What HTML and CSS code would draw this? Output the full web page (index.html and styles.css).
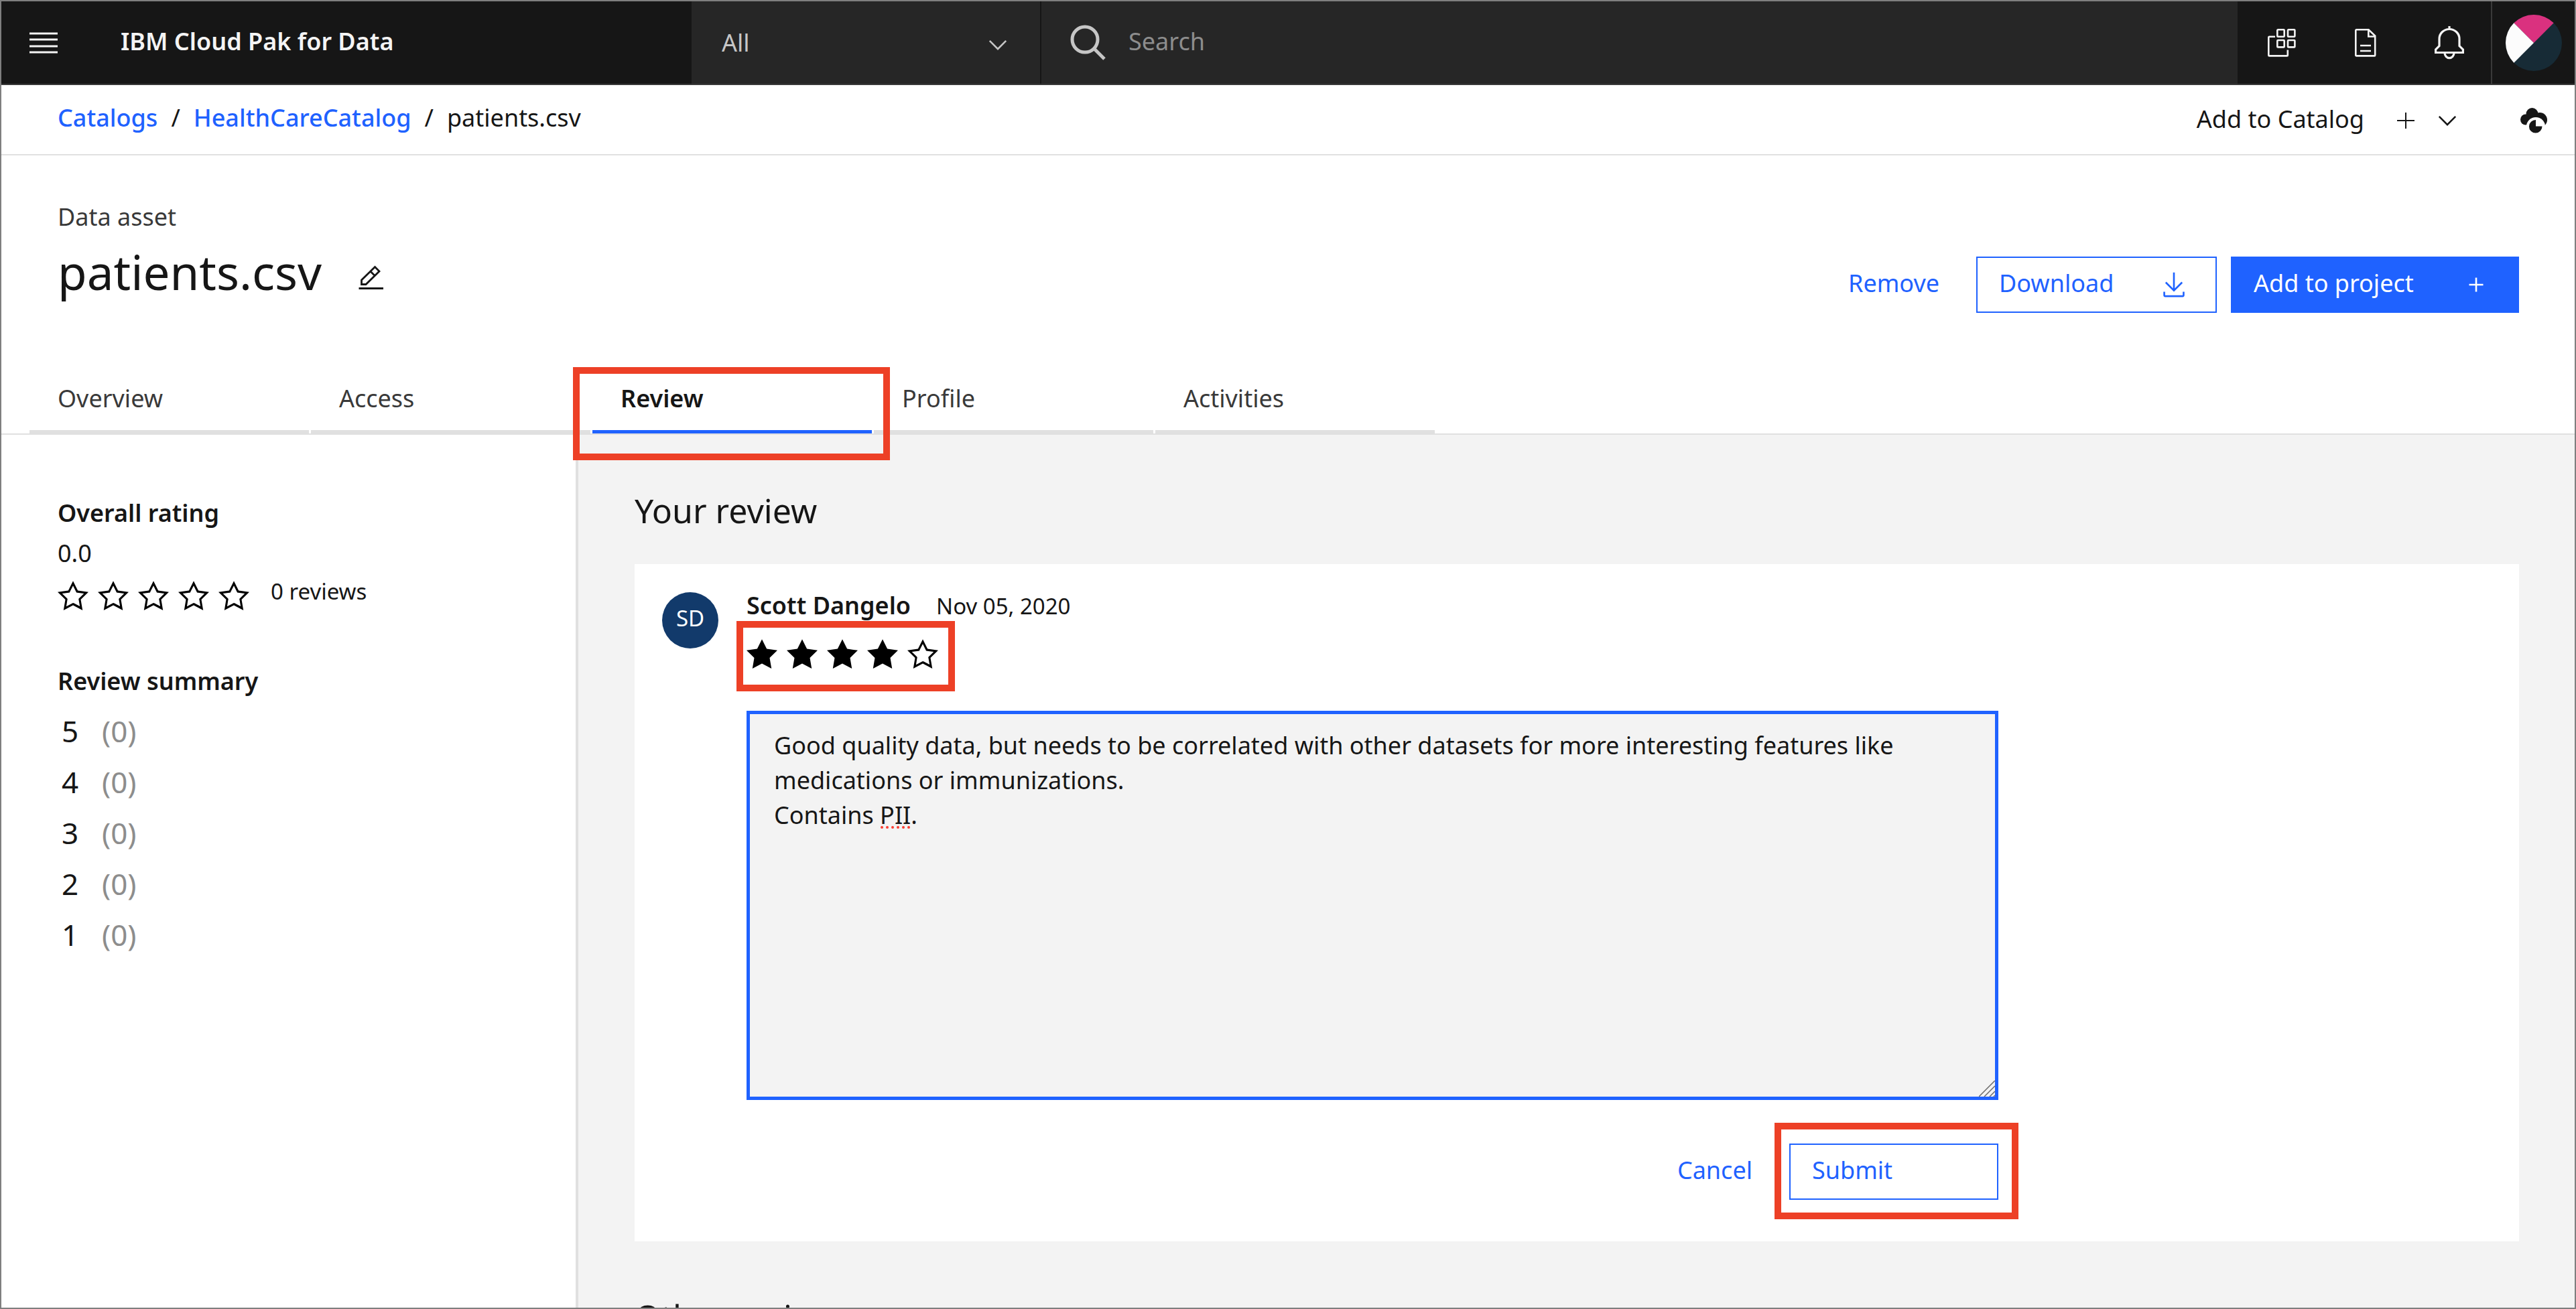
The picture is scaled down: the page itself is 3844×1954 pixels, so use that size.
FILE: index.html
```html
<!DOCTYPE html>
<html lang="en">
<head>
<meta charset="utf-8">
<meta name="viewport" content="width=device-width, initial-scale=1">
<title>patients.csv - IBM Cloud Pak for Data</title>
<link rel="stylesheet" href="styles.css">
</head>
<body>
<svg class="sprite" aria-hidden="true">
  <symbol id="star-outline" viewBox="0 0 32 32"><path d="M16,6.52l2.76,5.58.46,1,1,.15,6.16.89L22,18.44l-.75.73.18,1,1.05,6.13-5.51-2.89L16,23l-.93.49L9.56,26.34l1-6.13.18-1L10,18.44,5.58,14.09l6.16-.89,1-.15.46-1L16,6.52M16,2l-4.55,9.22L1.28,12.69l7.36,7.18L6.9,30,16,25.22,25.1,30,23.36,19.87l7.36-7.17L20.55,11.22Z"/></symbol>
  <symbol id="star-filled" viewBox="0 0 32 32"><path d="M16,2l-4.55,9.22L1.28,12.69l7.36,7.18L6.9,30,16,25.22,25.1,30,23.36,19.87l7.36-7.17L20.55,11.22Z"/></symbol>
  <symbol id="chevron" viewBox="0 0 16 16"><path d="M8 11L3 6 3.7 5.3 8 9.6 12.3 5.3 13 6z"/></symbol>
</svg>

<header class="topbar">
  <button class="icon-button" type="button" aria-label="Menu">
    <svg width="42" height="32" viewBox="0 0 42 32" fill="none" stroke="#f4f4f4" stroke-width="3"><path d="M0 2H42M0 11H42M0 21H42M0 30H42"/></svg>
  </button>
  <a class="brand" href="#">IBM Cloud Pak for Data</a>
  <div class="scope">
    <select class="scope-select" aria-label="Search scope"><option>All</option></select>
    <svg class="scope-arrow" width="42" height="42"><use href="#chevron"/></svg>
  </div>
  <div class="search">
    <svg width="54" height="54" viewBox="0 0 54 54" fill="none" stroke="#c6c6c6" stroke-width="5"><circle cx="22" cy="22" r="19"/><path d="M35 35L51 51"/></svg>
    <input class="search-input" type="search" placeholder="Search" aria-label="Search">
  </div>
  <nav class="tools">
    <button class="icon-button" type="button" aria-label="Services">
      <svg width="42" height="42" viewBox="0 0 42 42" fill="none" stroke="#f4f4f4" stroke-width="2.6"><rect x="14.3" y="1.3" width="10.4" height="10.4" rx="1"/><rect x="30" y="1.3" width="10.4" height="10.4" rx="1"/><rect x="14.3" y="17" width="10.4" height="10.4" rx="1"/><rect x="30" y="17" width="10.4" height="10.4" rx="1"/><path d="M11 11.7H2.3a1 1 0 0 0-1 1V39.4a1 1 0 0 0 1 1H28.8a1 1 0 0 0 1-1V31.5"/></svg>
    </button>
    <button class="icon-button" type="button" aria-label="Documents">
      <svg width="32" height="42" viewBox="0 0 32 42" fill="none" stroke="#f4f4f4" stroke-width="2.6"><path d="M2.3 1.3H20.5L30.2 10.5V39.4a1 1 0 0 1-1 1H2.3a1 1 0 0 1-1-1V2.3a1 1 0 0 1 1-1ZM20.3 1.3V11.5H30.2M8 25H24M8 33H24"/></svg>
    </button>
    <button class="icon-button" type="button" aria-label="Notifications">
      <svg width="46" height="52" viewBox="0 0 46 52" fill="none" stroke="#f4f4f4" stroke-width="3.2"><path d="M23 1V6M23 5.5C14.500 5.500 8 12 8 20V30.500L2.600 36V40.500H43.400V36L38 30.500V20C38 12 31.500 5.500 23 5.500ZM16 41a7 7.600 0 0 0 14 0"/></svg>
    </button>
    <button class="icon-button account" type="button" aria-label="Account">
      <svg width="84" height="84" viewBox="0 0 84 84"><circle cx="42" cy="42" r="42" fill="#172b36"/><path d="M42 42L12.300 12.300A42 42 0 0 1 71.700 12.300Z" fill="#da317f"/><path d="M42 42L12.300 71.700A42 42 0 0 1 12.300 12.300Z" fill="#fcfcfc"/></svg>
    </button>
  </nav>
</header>

<div class="crumbbar">
  <nav class="crumbs" aria-label="Breadcrumb">
    <a class="crumb-link" href="#">Catalogs</a><span>/</span><a class="crumb-link" href="#">HealthCareCatalog</a><span>/</span><span>patients.csv</span>
  </nav>
  <div class="crumb-actions">
    <button class="plain-button" type="button">
      <span class="label">Add to Catalog</span>
      <svg width="42" height="42" viewBox="0 0 42 42" stroke="#161616" stroke-width="2"><path d="M8 21H34M21 9V33"/></svg>
      <svg width="42" height="42" fill="#161616"><use href="#chevron"/></svg>
    </button>
    <button class="plain-button" type="button" aria-label="Cloud status">
      <svg width="40" height="38" viewBox="0 0 40 38"><g fill="#161616"><circle cx="17.500" cy="9" r="9"/><circle cx="8" cy="17.500" r="8"/><circle cx="29" cy="18" r="11"/><path d="M8 10H30V25H8Z"/></g><circle cx="23" cy="28" r="14" fill="#fff"/><path d="M23 27.500V18A9.800 9.800 0 1 0 32.500 27.500Z" fill="#161616"/></svg>
    </button>
  </div>
</div>

<section class="asset-head">
  <div class="asset-row">
    <div>
      <p class="asset-kind">Data asset</p>
      <div class="asset-name">
        <h1>patients.csv</h1>
        <button class="plain-button" type="button" aria-label="Edit name">
          <svg width="38" height="38" viewBox="0 0 38 38" fill="none" stroke="#161616" stroke-width="2.8"><path d="M4.500 22L24.500 2.500L31 9L11 28.500H4.500ZM18 9.300L24.500 15.800M0.500 34.500H37"/></svg>
        </button>
      </div>
    </div>
    <div class="asset-actions">
      <button class="btn ghost" type="button"><span class="label">Remove</span></button>
      <button class="btn outline download" type="button"><span class="label">Download</span>
        <svg width="42" height="42" viewBox="0 0 16 16" fill="#1f62ff"><path d="M13 7L12.300 6.300 8.500 10.100 8.500 1 7.500 1 7.500 10.100 3.700 6.300 3 7 8 12zM13 12v2H3v-2H2v2c0 .6.4 1 1 1h10c.6 0 1-.4 1-1v-2z"/></svg>
      </button>
      <button class="btn primary" type="button"><span class="label">Add to project</span>
        <svg width="42" height="42" viewBox="0 0 16 16" fill="#fff"><path d="M8.500 7.500V4h-1v3.500H4v1h3.500V12h1V8.500H12v-1z"/></svg>
      </button>
    </div>
  </div>
  <nav class="tabs" aria-label="Asset sections">
    <a class="tab" href="#">Overview</a>
    <a class="tab" href="#">Access</a>
    <a class="tab current" href="#" aria-current="page">Review<span class="marker marker-tab"></span></a>
    <a class="tab" href="#">Profile</a>
    <a class="tab" href="#">Activities</a>
  </nav>
</section>

<div class="content">
  <aside class="summary">
    <h3>Overall rating</h3>
    <p class="score">0.0</p>
    <div class="score-row">
      <div class="stars" role="img" aria-label="0 of 5 stars">
        <svg width="50" height="50"><use href="#star-outline"/></svg>
        <svg width="50" height="50"><use href="#star-outline"/></svg>
        <svg width="50" height="50"><use href="#star-outline"/></svg>
        <svg width="50" height="50"><use href="#star-outline"/></svg>
        <svg width="50" height="50"><use href="#star-outline"/></svg>
      </div>
      <span class="small">0 reviews</span>
    </div>
    <h3 class="breakdown-title">Review summary</h3>
    <ul class="breakdown">
      <li><span>5</span><span class="count">(0)</span></li>
      <li><span>4</span><span class="count">(0)</span></li>
      <li><span>3</span><span class="count">(0)</span></li>
      <li><span>2</span><span class="count">(0)</span></li>
      <li><span>1</span><span class="count">(0)</span></li>
    </ul>
  </aside>

  <main class="reviews">
    <h2>Your review</h2>
    <article class="card">
      <div class="avatar">SD</div>
      <form class="review-form">
        <div class="byline"><h3>Scott Dangelo</h3><time class="small" datetime="2020-11-05">Nov 05, 2020</time></div>
        <div class="stars rating" role="radiogroup" aria-label="Your rating">
          <label class="star"><input type="radio" name="rating" value="1" aria-label="1 star"><svg width="50" height="50"><use href="#star-filled"/></svg></label>
          <label class="star"><input type="radio" name="rating" value="2" aria-label="2 stars"><svg width="50" height="50"><use href="#star-filled"/></svg></label>
          <label class="star"><input type="radio" name="rating" value="3" aria-label="3 stars"><svg width="50" height="50"><use href="#star-filled"/></svg></label>
          <label class="star"><input type="radio" name="rating" value="4" aria-label="4 stars" checked><svg width="50" height="50"><use href="#star-filled"/></svg></label>
          <label class="star"><input type="radio" name="rating" value="5" aria-label="5 stars"><svg width="50" height="50"><use href="#star-outline"/></svg></label>
          <span class="marker marker-rating"></span>
        </div>
        <div class="field">
          <textarea class="review-text" aria-label="Review text" spellcheck="false">Good quality data, but needs to be correlated with other datasets for more interesting features like medications or immunizations.
Contains PII.</textarea>
          <svg class="spelling" width="46" height="4" viewBox="0 0 46 4" fill="#fb3e33"><circle cx="2" cy="2" r="2"/><circle cx="10" cy="2" r="2"/><circle cx="18" cy="2" r="2"/><circle cx="26" cy="2" r="2"/><circle cx="34" cy="2" r="2"/><circle cx="42" cy="2" r="2"/></svg>
          <svg class="grip" width="24" height="24" viewBox="0 0 24 24" stroke="#6a6a6a" stroke-width="1.500"><path d="M0 24L24 0M8 24L24 8M16 24L24 16M22 24L24 22"/></svg>
        </div>
        <div class="form-actions">
          <button class="btn ghost" type="button"><span class="label">Cancel</span></button>
          <button class="btn outline submit" type="button"><span class="label">Submit</span><span class="marker marker-submit"></span></button>
        </div>
      </form>
    </article>
    <h2 class="others">Other reviews</h2>
  </main>
</div>
</body>
</html>
```
FILE: styles.css
```css
* { box-sizing: border-box; }

html { overflow: hidden; }

body {
  display: flex;
  flex-direction: column;
  height: 100vh;
  margin: 0;
  overflow: hidden;
  border: 2px solid #7f7f7f;
  background: #fff;
  color: #161616;
  font: 400 36px/48px "Noto Sans", sans-serif;
}

h1, h2, h3, p, ul { margin: 0; padding: 0; }
h1 { font-size: 71px; line-height: 88px; font-weight: 400; }
h2 { font-size: 50px; line-height: 64px; font-weight: 400; }
h3 { font-size: 36px; font-weight: 600; }
svg { display: block; flex: none; }
a { color: inherit; text-decoration: none; }

button, input, select, textarea {
  margin: 0;
  padding: 0;
  border: 0;
  border-radius: 0;
  background: none;
  color: inherit;
  font: inherit;
}

.sprite { position: absolute; width: 0; height: 0; }
.small { font-size: 33px; }
.label { padding-bottom: 4px; }

/* Top bar */
.topbar {
  display: flex;
  flex: none;
  height: 125px;
  border-bottom: 2px solid #393939;
  background: #262626;
  color: #f4f4f4;
}
.icon-button {
  display: flex;
  align-items: center;
  justify-content: center;
  width: 125px;
  background: #161616;
}
.brand {
  display: flex;
  align-items: center;
  width: 905px;
  padding: 0 0 4px 53px;
  background: #161616;
  font-weight: 600;
}
.scope {
  position: relative;
  display: flex;
  width: 522px;
  border-right: 2px solid #161616;
  color: #c6c6c6;
}
.scope-select { width: 100%; padding-left: 45px; appearance: none; }
.scope-arrow { position: absolute; top: 44px; right: 42px; fill: #c6c6c6; }
.search {
  display: flex;
  flex: 1;
  align-items: center;
  gap: 33px;
  padding-left: 43px;
}
.search-input { flex: 1; padding-bottom: 4px; appearance: none; outline: 0; }
.search-input::placeholder { color: #8d8d8d; opacity: 1; }
.tools { display: flex; background: #161616; padding-left: 3px; }
.account { border-left: 2px solid #393939; }

/* Breadcrumb bar */
.crumbbar {
  display: flex;
  flex: none;
  align-items: center;
  justify-content: space-between;
  height: 105px;
  padding: 0 41px 0 84px;
  border-bottom: 2px solid #e0e0e0;
}
.crumbs { display: flex; gap: 20px; padding-bottom: 6px; }
.crumb-link { color: #1f62ff; font-weight: 500; }
.crumb-actions { display: flex; align-items: center; gap: 88px; }
.plain-button { display: flex; align-items: center; gap: 20px; padding-top: 2px; }
.plain-button .label { margin-right: 21px; }

/* Asset header */
.asset-head { flex: none; border-bottom: 2px solid #e0e0e0; }
.asset-row {
  display: flex;
  align-items: flex-start;
  justify-content: space-between;
  padding: 68px 83px 0 84px;
}
.asset-kind { margin-bottom: 14px; color: #393939; }
.asset-name { display: flex; align-items: center; gap: 55px; }
.asset-name .plain-button { padding-top: 18px; }
.asset-actions { display: flex; margin-top: 83px; gap: 21px; }

.btn {
  position: relative;
  display: flex;
  align-items: center;
  justify-content: space-between;
  height: 84px;
  padding: 0 41px 0 32px;
  border: 2px solid transparent;
  color: #1f62ff;
}
.ghost { padding: 0 32px; }
.outline { border-color: #1f62ff; }
.primary { width: 430px; background: #1f62ff; color: #fff; }
.download { width: 359px; }
.submit { width: 312px; }

.tabs { display: flex; gap: 3px; margin-top: 82px; padding-left: 42px; }
.tab {
  position: relative;
  width: 417px;
  padding: 22px 0 23px 42px;
  border-bottom: 5px solid #e0e0e0;
  color: #393939;
}
.current { border-color: #1f62ff; color: #161616; font-weight: 600; }

/* Highlight frames drawn over the page */
.marker {
  position: absolute;
  z-index: 1;
  border: 10px solid #ed4026;
  pointer-events: none;
}
.marker-tab { top: -1px; left: -29px; width: 473px; height: 139px; }
.marker-rating { top: -24px; left: -13px; width: 326px; height: 105px; }
.marker-submit { top: -33px; left: -24px; width: 364px; height: 144px; }

/* Content */
.content {
  display: grid;
  flex: 1;
  grid-template-columns: 861px 1fr;
  min-height: 0;
}
.summary { padding: 93px 0 0 84px; border-right: 4px solid #e0e0e0; }
.score { margin-top: 12px; }
.score-row { display: flex; gap: 30px; margin-top: 14px; }
.score-row .small { margin-top: -5px; }
.stars { display: flex; gap: 10px; margin-left: -2px; }
.breakdown-title { margin-top: 79px; }
.breakdown { margin-top: 12px; font-size: 44px; line-height: 76px; list-style: none; }
.breakdown li { display: grid; grid-template-columns: 60px auto; padding-left: 6px; }
.count { color: #8d8d8d; }

.reviews {
  min-width: 0;
  overflow: hidden;
  padding: 81px 83px 0 84px;
  background: #f3f3f3;
}
.card {
  display: grid;
  grid-template-columns: 84px minmax(0, 1868px);
  gap: 42px;
  margin-top: 48px;
  padding: 38px 41px 62px;
  background: #fff;
}
.avatar {
  height: 84px;
  margin-top: 4px;
  padding-top: 15px;
  border-radius: 50%;
  background: #123a6b;
  color: #fff;
  font-size: 33px;
  text-align: center;
}
.byline { display: flex; align-items: baseline; gap: 38px; }
.rating { position: relative; width: max-content; margin-top: 22px; }
.star { position: relative; }
.star input { position: absolute; inset: 0; appearance: none; }
.field { position: relative; margin-top: 60px; }
.review-text {
  display: block;
  width: 100%;
  height: 581px;
  padding: 21px 60px 20px 36px;
  border: 5px solid #1f62ff;
  outline: 0;
  background: #f3f3f3;
  line-height: 52px;
  resize: none;
}
.spelling { position: absolute; top: 172px; left: 200px; }
.grip { position: absolute; right: 5px; bottom: 5px; }
.form-actions { display: flex; justify-content: flex-end; gap: 21px; margin-top: 65px; }
.others { margin-top: 80px; }
```
